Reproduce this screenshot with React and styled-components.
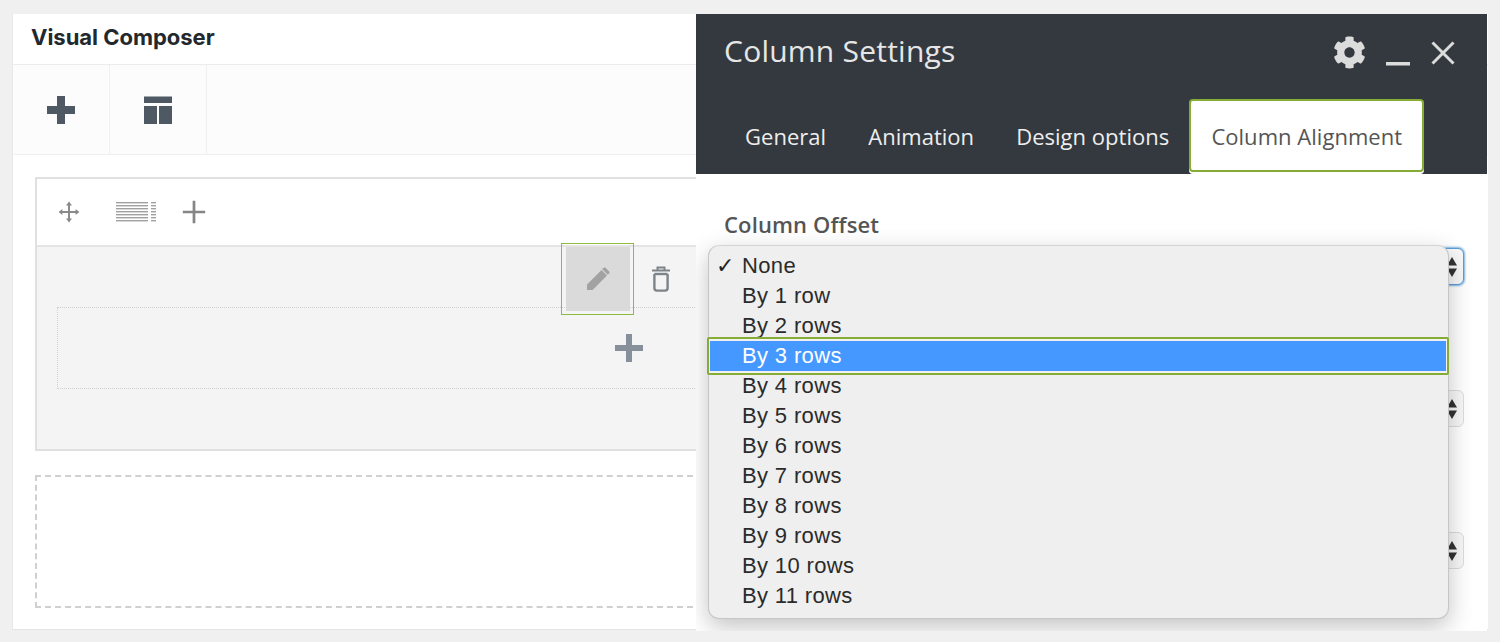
import React from "react";
import styled, { createGlobalStyle } from "styled-components";
import { FaCog } from "react-icons/fa";

const Global = createGlobalStyle`
  html, body { margin: 0; padding: 0; background: #f0f0f0; overflow: hidden; }
  body { font-family: "Open Sans", sans-serif; }
`;
const Page = styled.div`
  position: relative;
  width: 1500px;
  height: 642px;
  padding: 14px 12px 0;
  box-sizing: border-box;
  overflow: hidden;
`;
const Card = styled.div`
  width: 1476px;
  height: 616px;
  background: #fff;
  border-bottom: 1px solid #e4e4e4;
  border-left: 1px solid #e8e8e8;
  box-sizing: border-box;
`;
const CardHeader = styled.div`
  height: 51px;
  display: flex;
  align-items: center;
  padding-left: 18px;
  font: 700 22px/1 Inter, "Liberation Sans", sans-serif;
  letter-spacing: -0.02px;
  color: #23282d;
  border-bottom: 1px solid #ececec;
  padding-bottom: 4px;
  box-sizing: border-box;
`;
const Toolbar = styled.div`
  height: 90px;
  display: flex;
  background: #fcfcfc;
  border-bottom: 1px solid #f0f0f0;
  box-sizing: border-box;
`;
const ToolButton = styled.div`
  width: 97px;
  display: flex;
  align-items: center;
  justify-content: center;
  border-right: 1px solid #f0f0f0;
  box-sizing: border-box;
`;
const Content = styled.div`
  padding: 22px 0 0 22px;
`;
const Row = styled.div`
  width: 1300px;
  height: 274px;
  border: 2px solid #e0e0e0;
  box-sizing: border-box;
`;
const RowHead = styled.div`
  height: 68px;
  display: flex;
  align-items: center;
  background: #fff;
  border-bottom: 2px solid #e4e4e4;
  box-sizing: border-box;
  padding-left: 21px;
`;
const IconSlot = styled.span`
  display: flex;
  margin-left: ${(p) => p.$gap}px;
`;
const RowBody = styled.div`
  height: 202px;
  background: #f4f4f4;
  padding-left: 20px;
  box-sizing: border-box;
`;
const ColumnControls = styled.div`
  height: 60px;
  display: flex;
  align-items: flex-start;
  padding-left: 509px;
`;
const EditButton = styled.div`
  position: relative;
  width: 64px;
  height: 64px;
  background: #dadada;
  display: flex;
  align-items: center;
  justify-content: center;
  flex: none;
  &::after {
    content: "";
    position: absolute;
    inset: -4px -4px -4px -5px;
    border: 1px solid #8cbb3f;
  }
`;
const DeleteButton = styled.div`
  width: 62px;
  height: 64px;
  display: flex;
  align-items: center;
  justify-content: center;
  flex: none;
`;
const Dropzone = styled.div`
  height: 82px;
  border: 1px dotted #cfcfcf;
  box-sizing: border-box;
  display: flex;
  align-items: center;
  padding-left: 556px;
`;
const EmptyRow = styled.div`
  width: 1300px;
  height: 133px;
  margin-top: 24px;
  border: 2px dashed #d0d0d0;
  box-sizing: border-box;
`;
const Modal = styled.div`
  position: absolute;
  left: 696px;
  top: 14px;
  width: 791px;
  height: 617px;
  background: #fff;
  overflow: hidden;
`;
const ModalHeader = styled.div`
  height: 160px;
  background: #343940;
  display: flex;
  flex-direction: column;
  justify-content: space-between;
  box-sizing: border-box;
  padding-left: 28px;
`;
const TitleBar = styled.div`
  display: flex;
  justify-content: space-between;
  align-items: center;
  padding: 15px 31px 0 0;
`;
const Title = styled.div`
  font: 400 30px/44px "Open Sans", sans-serif;
  letter-spacing: 0.23px;
  color: #e6e6e6;
`;
const HeaderActions = styled.div`
  display: flex;
  align-items: center;
  gap: 20px;
  margin-top: 3px;
  color: #dcdcdc;
`;
const Tabs = styled.div`
  display: flex;
  align-items: flex-end;
  padding-bottom: 2px;
`;
const Tab = styled.div`
  height: 73px;
  padding: 0 ${(p) => (p.$active ? "20px" : "19px")};
  margin-left: ${(p) => (p.$active ? "-1px" : "0")};
  display: flex;
  align-items: center;
  font: ${(p) => (p.$active ? 400 : 500)} 22px/1 "Open Sans", sans-serif;
  letter-spacing: 0.03px;
  color: ${(p) => (p.$active ? "#555" : "#eee")};
  background: ${(p) => (p.$active ? "#fff" : "transparent")};
  border: 2px solid ${(p) => (p.$active ? "#85ad35" : "transparent")};
  box-shadow: ${(p) => (p.$active ? "0 2px 0 #fff" : "none")};
  border-radius: 4px;
  box-sizing: border-box;
`;
const ModalBody = styled.div`
  padding: 35px 23px 0 28px;
`;
const FieldLabel = styled.div`
  font: 600 22px/30px "Open Sans", sans-serif;
  letter-spacing: 0.13px;
  color: #555;
`;
const SelectStack = styled.div`
  display: flex;
  flex-direction: column;
  gap: 105px;
  margin-top: 9px;
`;
const SelectBox = styled.div`
  height: 37px;
  border: 1px solid ${(p) => (p.$focus ? "#5b9dd9" : "#ddd")};
  box-shadow: ${(p) => (p.$focus ? "0 0 2px 1px #7fb3e2" : "none")};
  border-radius: 6px;
  background: #f8f8f8;
  box-sizing: border-box;
  display: flex;
  align-items: center;
  justify-content: flex-end;
  padding-right: 6px;
`;
const Menu = styled.div`
  position: absolute;
  left: 12px;
  top: 231px;
  width: 741px;
  height: 374px;
  box-sizing: border-box;
  padding-top: 5px;
  background: #efefef;
  border: 1px solid #c6c6c6;
  border-top-color: #d4d4d4;
  border-radius: 11px;
  box-shadow: 0 8px 24px rgba(0, 0, 0, 0.24);
`;
const Option = styled.div`
  position: relative;
  height: 30px;
  line-height: 30px;
  padding-left: 33px;
  font-family: "Liberation Sans", sans-serif;
  font-size: 22px;
  letter-spacing: 0.35px;
  color: ${(p) => (p.$selected ? "#fff" : "#2b2b2b")};
  background: ${(p) => (p.$selected ? "#4598ff" : "transparent")};
  &::after {
    content: ${(p) => (p.$selected ? '""' : "none")};
    position: absolute;
    inset: -4px -1px -4px -2px;
    border: 2px solid #85ad35;
    box-shadow: inset 0 0 0 1px #f4f4f4;
    border-radius: 2px;
  }
`;
const Check = styled.span`
  position: absolute;
  left: 7px;
  font-size: 22px;
  font-weight: 700;
  font-family: "DejaVu Sans", sans-serif;
  color: #222;
`;

const Plus = ({ size = 30, w = 8, color = "#4e5963" }) => (
  <svg width={size} height={size} viewBox="0 0 30 30">
    <path d={`M${15 - w / 2} 1h${w}v${14 - w / 2}H29v${w}H${15 + w / 2}V29h${-w}V${15 + w / 2}H1v${-w}H${15 - w / 2}z`} fill={color} />
  </svg>
);
const LayoutIcon = () => (
  <svg width="30" height="30" viewBox="0 0 30 30">
    <path d="M1 1.5h28v6.5H1zM1 11h13v18H1zM16 11h13v18H16z" fill="#4e5963" />
  </svg>
);
const MoveIcon = () => (
  <svg width="22" height="22" viewBox="0 0 22 22" fill="none" stroke="#8a8a8a" strokeWidth="2">
    <path d="M11 2v18M2 11h18" />
    <path d="M8 4.4 11 .6l3 3.8zM8 17.6l3 3.8 3-3.8zM4.4 8 .6 11l3.8 3zM17.6 8l3.8 3-3.8 3z" fill="#8a8a8a" stroke="none" />
  </svg>
);
const ColumnsIcon = () => (
  <svg width="40" height="20" viewBox="0 0 40 20">
    {[1, 4, 7, 10, 13, 16, 19].map((y) => (
      <g key={y}>
        <rect x="0" y={y - 1} width="32" height="1.4" fill="#a0a0a0" />
        <rect x="35" y={y - 1} width="5" height="1.4" fill="#a0a0a0" />
      </g>
    ))}
  </svg>
);
const PencilIcon = () => (
  <svg width="24" height="24" viewBox="0 0 24 24">
    <path d="M1 23v-5.6L15.5 3l5.5 5.5L6.6 23zM17.2 1.3 19 0.3l4.7 4.7-1 1.9-1.3 0.6-5.4-5.4z" fill="#a2a2a2" />
  </svg>
);
const TrashIcon = () => (
  <svg width="20" height="26" viewBox="0 0 20 26" fill="none" stroke="#7d8489" strokeWidth="2.4">
    <path d="M1 4.4h18M6.5 3.4V1.4h7v2" strokeWidth="2" />
    <path d="M3.4 8v14a2.6 2.6 0 0 0 2.6 2.6h8a2.6 2.6 0 0 0 2.6-2.6V8" />
    <path d="M3.4 8h13.2" />
  </svg>
);
const Minimize = () => (
  <svg width="24" height="30" viewBox="0 0 24 30"><rect x="0" y="24" width="24" height="3.5" fill="#dcdcdc" /></svg>
);
const CloseIcon = () => (
  <svg width="26" height="26" viewBox="0 0 26 26" stroke="#dcdcdc" strokeWidth="3"><path d="M2.5 2.5l21 21M23.5 2.5l-21 21" /></svg>
);
const Updown = () => (
  <svg width="10" height="20" viewBox="0 0 10 20" fill="#333"><path d="M5 0l5 8.5H0zM5 20 0 11.5h10z" /></svg>
);

const options = ["None", "By 1 row", "By 2 rows", "By 3 rows", "By 4 rows", "By 5 rows", "By 6 rows", "By 7 rows", "By 8 rows", "By 9 rows", "By 10 rows", "By 11 rows"];

export default function App() {
  return (
    <Page>
      <Global />
      <Card>
        <CardHeader>Visual Composer</CardHeader>
        <Toolbar>
          <ToolButton><Plus /></ToolButton>
          <ToolButton><LayoutIcon /></ToolButton>
        </Toolbar>
        <Content>
          <Row>
            <RowHead>
              <MoveIcon />
              <IconSlot $gap={36}><ColumnsIcon /></IconSlot>
              <IconSlot $gap={26}><Plus size={24} w={3.4} color="#858585" /></IconSlot>
            </RowHead>
            <RowBody>
              <ColumnControls>
                <EditButton><PencilIcon /></EditButton>
                <DeleteButton><TrashIcon /></DeleteButton>
              </ColumnControls>
              <Dropzone><Plus color="#87909a" w={6} /></Dropzone>
            </RowBody>
          </Row>
          <EmptyRow />
        </Content>
      </Card>
      <Modal>
        <ModalHeader>
          <TitleBar>
            <Title>Column Settings</Title>
            <HeaderActions>
              <FaCog size={33} />
              <Minimize />
              <CloseIcon />
            </HeaderActions>
          </TitleBar>
          <Tabs>
            <Tab>General</Tab>
            <Tab>Animation</Tab>
            <Tab>Design options</Tab>
            <Tab $active>Column Alignment</Tab>
          </Tabs>
        </ModalHeader>
        <ModalBody>
          <FieldLabel>Column Offset</FieldLabel>
          <SelectStack>
            <SelectBox $focus><Updown /></SelectBox>
            <SelectBox><Updown /></SelectBox>
            <SelectBox><Updown /></SelectBox>
          </SelectStack>
        </ModalBody>
        <Menu>
          {options.map((o, i) => (
            <Option key={o} $selected={i === 3}>
              {i === 0 && <Check>✓</Check>}
              {o}
            </Option>
          ))}
        </Menu>
      </Modal>
    </Page>
  );
}
